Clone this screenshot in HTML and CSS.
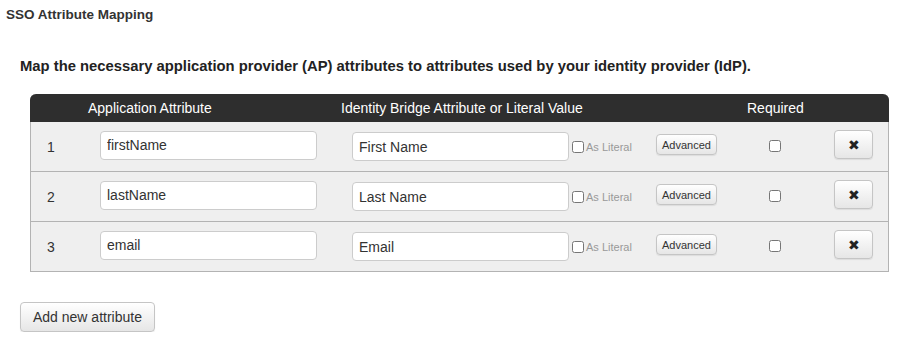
FILE: index.html
```html
<!DOCTYPE html>
<html lang="en">
<head>
  <meta charset="UTF-8">
  <title>SSO Attribute Mapping</title>
  <link rel="stylesheet" href="styles.css">
</head>
<body>
  <h2 class="title">SSO Attribute Mapping</h2>

  <p class="intro">Map the necessary application provider (AP) attributes to attributes used by your identity provider (IdP).</p>

  <div class="mapping">
    <div class="mapping-head">
      <span></span>
      <span>Application Attribute</span>
      <span>Identity Bridge Attribute or Literal Value</span>
      <span>Required</span>
    </div>

    <div class="mapping-row">
      <span class="num">1</span>
      <input class="field ap" type="text" value="firstName">
      <div class="idp">
        <input class="field" type="text" value="First Name">
        <label class="literal"><input type="checkbox"> As Literal</label>
        <button class="btn small">Advanced</button>
      </div>
      <div class="req"><input type="checkbox"></div>
      <div class="del"><button class="btn remove">&#10006;</button></div>
    </div>

    <div class="mapping-row">
      <span class="num">2</span>
      <input class="field ap" type="text" value="lastName">
      <div class="idp">
        <input class="field" type="text" value="Last Name">
        <label class="literal"><input type="checkbox"> As Literal</label>
        <button class="btn small">Advanced</button>
      </div>
      <div class="req"><input type="checkbox"></div>
      <div class="del"><button class="btn remove">&#10006;</button></div>
    </div>

    <div class="mapping-row">
      <span class="num">3</span>
      <input class="field ap" type="text" value="email">
      <div class="idp">
        <input class="field" type="text" value="Email">
        <label class="literal"><input type="checkbox"> As Literal</label>
        <button class="btn small">Advanced</button>
      </div>
      <div class="req"><input type="checkbox"></div>
      <div class="del"><button class="btn remove">&#10006;</button></div>
    </div>
  </div>

  <button class="btn add">Add new attribute</button>
</body>
</html>
```

FILE: styles.css
```css
body {
  margin: 0;
  padding: 7px 11px 0 6px;
  font-family: "Liberation Sans", Arial, sans-serif;
  color: #333;
  background: #fff;
}

.title {
  font-size: 13.5px;
  font-weight: 700;
  margin: 0;
  line-height: 15px;
}

.intro {
  font-size: 14.8px;
  font-weight: 700;
  color: #222;
  margin: 36px 0 0 14px;
  line-height: 17px;
}

.mapping {
  margin: 19px 0 0 24px;
  border: 1px solid #b3b3b3;
  border-top: none;
  border-radius: 6px 6px 0 0;
}

.mapping-head {
  display: grid;
  grid-template-columns: 58px 253px 406px 1fr;
  height: 28px;
  align-items: center;
  background: #2e2e2e;
  color: #fff;
  font-size: 14px;
  border-radius: 6px 6px 0 0;
  margin: 0 -1px;
}

.mapping-row {
  display: grid;
  grid-template-columns: 69px 252px 388px 72px 1fr;
  align-items: center;
  height: 49px;
  background: #efefef;
  border-top: 1px solid #b3b3b3;
}

.mapping-head + .mapping-row {
  border-top: none;
}

.num {
  padding-left: 16px;
  font-size: 14px;
}

.field {
  box-sizing: border-box;
  width: 217px;
  height: 29px;
  padding: 0 6px;
  border: 1px solid #ccc;
  border-radius: 4px;
  background: #fff;
  font-family: inherit;
  font-size: 14px;
  color: #333;
}

.ap {
  margin-top: -3px;
}

.idp {
  display: flex;
  align-items: center;
}

.literal {
  display: flex;
  align-items: center;
  font-size: 11px;
  color: #999;
  margin-left: 3px;
  width: 84px;
}

.literal input {
  margin: 0 2px 0 0;
  width: 12px;
  height: 12px;
}

.req {
  text-align: center;
  padding-right: 3px;
}

.req input {
  margin: -2px 0 0;
  width: 12px;
  height: 12px;
}

.del {
  padding-left: 22px;
}

.btn {
  font-family: inherit;
  color: #333;
  background: linear-gradient(#fff, #e6e6e6);
  border: 1px solid #c5c5c5;
  border-radius: 4px;
  box-shadow: 0 1px 1px rgba(0, 0, 0, 0.08);
  cursor: pointer;
}

.small {
  font-size: 11px;
  height: 21px;
  width: 61px;
  padding: 0;
  margin-top: -4px;
}

.remove {
  width: 39px;
  height: 29px;
  padding: 0;
  font-size: 14px;
  color: #222;
  margin-top: -4px;
}

.add {
  margin: 30px 0 0 14px;
  font-size: 14px;
  height: 30px;
  padding: 0 12px;
}
```
